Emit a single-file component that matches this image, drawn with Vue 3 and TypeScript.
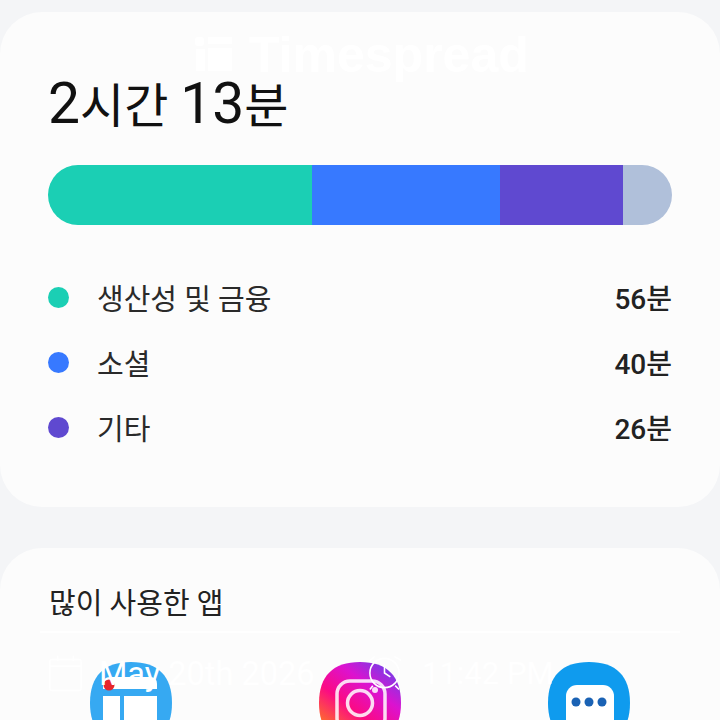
<script setup lang="ts">
interface Category {
  name: string;
  time: string;
  color: string;
}

const categories: Category[] = [
  { name: '생산성 및 금융', time: '56분', color: '#1bcfb4' },
  { name: '소셜', time: '40분', color: '#3779ff' },
  { name: '기타', time: '26분', color: '#5f49d0' },
];

const segments = [
  { color: '#1bcfb4', width: 264 },
  { color: '#3779ff', width: 188 },
  { color: '#5f49d0', width: 123 },
  { color: '#b0c0da', width: 49 },
];
</script>

<template>
  <main class="screen">
    <section class="card summary">
      <h1 class="total">
        <span class="num">2</span>시간 <span class="num">13</span>분
      </h1>
      <div class="bar">
        <div
          v-for="seg in segments"
          :key="seg.color"
          class="bar__seg"
          :style="{ width: seg.width + 'px', background: seg.color }"
        ></div>
      </div>
      <ul class="legend">
        <li v-for="cat in categories" :key="cat.name" class="legend__row">
          <span class="legend__dot" :style="{ background: cat.color }"></span>
          <span class="legend__name">{{ cat.name }}</span>
          <span class="legend__time">{{ cat.time }}</span>
        </li>
      </ul>
    </section>

    <section class="card apps">
      <h2 class="apps__title">많이 사용한 앱</h2>
      <div class="apps__line"></div>
      <div class="apps__grid">
        <svg class="app" viewBox="0 0 82 82">
          <path d="M41 0C68 0 82 14 82 41S68 82 41 82 0 68 0 41 14 0 41 0Z" fill="#36a9f2" />
          <path d="M13 27V22Q13 15 20 15H60Q67 15 67 22V27Z" fill="#fff" />
          <rect x="13" y="34" width="17" height="48" fill="#fff" />
          <rect x="34" y="34" width="33" height="48" fill="#fff" />
          <circle cx="19" cy="23" r="5.5" fill="#e6262c" />
        </svg>
        <svg class="app" viewBox="0 0 82 82">
          <defs>
            <linearGradient id="insta" x1="0.75" y1="0" x2="0.1" y2="0.85">
              <stop offset="0" stop-color="#7d3be6" />
              <stop offset="0.3" stop-color="#dc12cf" />
              <stop offset="0.62" stop-color="#fb0a84" />
              <stop offset="1" stop-color="#ff7a20" />
            </linearGradient>
          </defs>
          <path d="M41 0C68 0 82 14 82 41S68 82 41 82 0 68 0 41 14 0 41 0Z" fill="url(#insta)" />
          <rect x="18" y="19" width="48" height="50" rx="13" fill="none" stroke="#fff" stroke-opacity="0.85" stroke-width="3.5" />
          <circle cx="41" cy="41" r="12.5" fill="none" stroke="#fff" stroke-opacity="0.85" stroke-width="3.5" />
          <circle cx="56" cy="28" r="3" fill="#fff" fill-opacity="0.85" />
        </svg>
        <svg class="app" viewBox="0 0 82 82">
          <path d="M41 0C68 0 82 14 82 41S68 82 41 82 0 68 0 41 14 0 41 0Z" fill="#0f9bee" />
          <rect x="18" y="23" width="48" height="59" rx="11" fill="#fff" />
          <circle cx="28" cy="40" r="4.5" fill="#1a62b4" />
          <circle cx="41" cy="40" r="4.5" fill="#1a62b4" />
          <circle cx="54" cy="40" r="4.5" fill="#1a62b4" />
        </svg>
      </div>
    </section>

    <!-- white watermark over the screenshot -->
    <div class="mark mark--brand">
      <svg class="mark__logo" viewBox="0 0 38 36">
        <rect x="1" y="0" width="9" height="9" rx="3" fill="#fff" />
        <rect x="2" y="12" width="9" height="22" fill="#fff" />
        <rect x="14" y="0" width="24" height="7" fill="#fff" />
        <rect x="14" y="11" width="24" height="23" fill="#fff" />
      </svg>
      <span>Timespread</span>
    </div>
    <div class="mark mark--date">
      <svg class="mark__icon" viewBox="0 0 34 38" fill="none" stroke="#fff" stroke-width="1.5">
        <rect x="1" y="5" width="32" height="32" rx="2" />
        <path d="M1 12H33M9 1V7M25 1V7" />
      </svg>
      <span class="mark__text">May 20th 2026</span>
    </div>
    <div class="mark mark--time">
      <svg class="mark__clock" viewBox="0 0 38 38" fill="none" stroke="#fff" stroke-width="1.6">
        <circle cx="19" cy="19" r="15" />
        <path d="M19 10V19L25 23M3 7L9 2M29 2L36 6M7 32L4 36M30 32L34 36" />
      </svg>
      <span class="mark__text">11:42 PM</span>
    </div>
  </main>
</template>

<style>
html,
body {
  margin: 0;
  overflow: hidden;
}
</style>

<style scoped>
.screen {
  position: relative;
  box-sizing: border-box;
  height: 720px;
  overflow: hidden;
  padding-top: 12px;
  display: flex;
  flex-direction: column;
  gap: 41px;
  background: #f4f5f7;
  font-family: Roboto, "Noto Sans CJK KR", sans-serif;
  color: #1c1c1c;
}

.card {
  flex: none;
  background: #fcfcfc;
  border-radius: 42px;
}

.summary {
  box-sizing: border-box;
  height: 495px;
  padding: 57px 48px 0;
}

.total {
  margin: 0;
  height: 70px;
  font-size: 48px;
  line-height: 70px;
  font-weight: 400;
  color: #111;
}

.num {
  font-size: 57px;
  font-weight: 400;
}

.bar {
  display: flex;
  width: 624px;
  height: 60px;
  margin-top: 26px;
  border-radius: 30px;
  overflow: hidden;
}

.bar__seg {
  flex: none;
}

.legend {
  list-style: none;
  margin: 52px 0 0;
  padding: 0;
  display: flex;
  flex-direction: column;
  gap: 25px;
}

.legend__row {
  display: flex;
  align-items: center;
  height: 40px;
  font-size: 29px;
}

.legend__dot {
  width: 21px;
  height: 21px;
  border-radius: 50%;
  margin-right: 28px;
}

.legend__name {
  flex: 1;
  color: #2a2a2a;
}

.legend__time {
  font-size: 28px;
  font-weight: 500;
  color: #222;
}

.apps {
  flex: 1;
  min-height: 300px;
  padding: 36px 16px 0;
}

.apps__title {
  margin: 0 0 0 33px;
  font-size: 29px;
  line-height: 40px;
  font-weight: 400;
  color: #222;
}

.apps__line {
  height: 2px;
  margin: 7px 24px 0;
  background: #fff;
}

.apps__grid {
  display: grid;
  grid-template-columns: repeat(3, 1fr);
  justify-items: center;
  margin-top: 29px;
}

.app {
  width: 82px;
  height: 82px;
}

.mark {
  position: absolute;
  display: flex;
  align-items: center;
  color: #fff;
}

.mark--brand {
  left: 194px;
  top: 37px;
  gap: 17px;
  font-family: "Liberation Sans", Arial, sans-serif;
  font-size: 50px;
  line-height: 36px;
  font-weight: 700;
}

.mark__logo {
  width: 38px;
  height: 36px;
}

.mark--date {
  left: 49px;
  top: 652px;
  gap: 17px;
  font-size: 32.5px;
  line-height: 38px;
}

.mark__icon {
  width: 33px;
  height: 38px;
}

.mark--date .mark__text {
  padding-top: 3px;
}

.mark--time {
  left: 366px;
  top: 652px;
  gap: 19px;
  font-size: 31px;
  line-height: 38px;
}

.mark--time .mark__text {
  padding-top: 3px;
}

.mark__clock {
  width: 37px;
  height: 38px;
}
</style>
